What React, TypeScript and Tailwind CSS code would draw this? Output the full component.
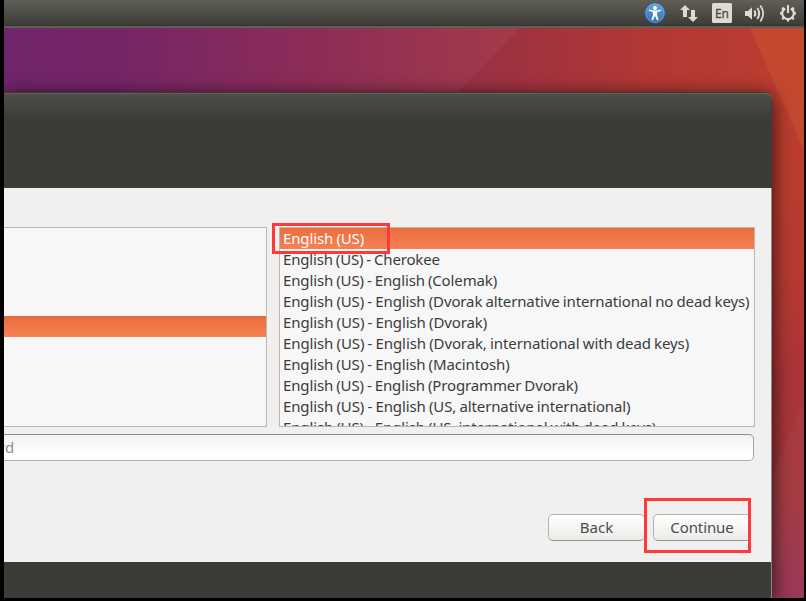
import React from "react";

const layouts = [
  { name: "English (US)", cls: "tracking-[-0.13px] [word-spacing:-0.5px]" },
  { name: "English (US) - Cherokee", cls: "tracking-[-0.16px] [word-spacing:-0.8px]" },
  { name: "English (US) - English (Colemak)", cls: "tracking-[-0.13px] [word-spacing:-0.7px]" },
  {
    name: "English (US) - English (Dvorak alternative international no dead keys)",
    cls: "tracking-[-0.13px] [word-spacing:-0.5px]",
  },
  { name: "English (US) - English (Dvorak)", cls: "tracking-[-0.1px] [word-spacing:-0.6px]" },
  {
    name: "English (US) - English (Dvorak, international with dead keys)",
    cls: "tracking-[-0.11px] [word-spacing:-0.5px]",
  },
  { name: "English (US) - English (Macintosh)", cls: "tracking-[-0.12px] [word-spacing:-0.6px]" },
  { name: "English (US) - English (Programmer Dvorak)", cls: "tracking-[-0.13px] [word-spacing:-0.7px]" },
  {
    name: "English (US) - English (US, alternative international)",
    cls: "tracking-[-0.12px] [word-spacing:-0.5px]",
  },
  {
    name: "English (US) - English (US, international with dead keys)",
    cls: "tracking-[-0.14px] [word-spacing:-0.6px]",
  },
];

function Wallpaper() {
  return (
    <svg className="absolute inset-0 h-full w-full" viewBox="0 0 800 570" preserveAspectRatio="none">
      <defs>
        <linearGradient id="sky" gradientUnits="userSpaceOnUse" x1="0" y1="0" x2="800" y2="0">
          <stop offset="0" stopColor="#70246b" />
          <stop offset="0.14" stopColor="#752567" />
          <stop offset="0.34" stopColor="#892b5a" />
          <stop offset="0.5" stopColor="#922f50" />
          <stop offset="0.65" stopColor="#a1323f" />
          <stop offset="0.8" stopColor="#b13834" />
          <stop offset="1" stopColor="#bc3e2e" />
        </linearGradient>
        <linearGradient id="facet" gradientUnits="userSpaceOnUse" x1="300" y1="0" x2="500" y2="0">
          <stop offset="0" stopColor="#a84858" stopOpacity="0" />
          <stop offset="1" stopColor="#a84858" stopOpacity="0.35" />
        </linearGradient>
        <linearGradient id="side" x1="0" y1="0" x2="0" y2="1">
          <stop offset="0" stopColor="#bc3e2e" />
          <stop offset="0.35" stopColor="#b63a30" />
          <stop offset="0.55" stopColor="#ab3437" />
          <stop offset="0.8" stopColor="#a0363f" />
          <stop offset="1" stopColor="#93325a" />
        </linearGradient>
      </defs>
      <rect width="800" height="570" fill="url(#sky)" />
      <rect x="766" y="66" width="34" height="504" fill="url(#side)" />
      <path d="M300 0H516L451 66H300Z" fill="url(#facet)" />
      <path d="M746 0H800V122Z" fill="#c44c30" opacity="0.8" />
      <path d="M800 374V570H767V450Z" fill="#b05050" opacity="0.25" />
    </svg>
  );
}

function Indicators() {
  return (
    <svg className="ml-auto h-[25px] w-[164px]" viewBox="640 0 164 25">
      <defs>
        <linearGradient id="ball" x1="0" y1="0" x2="0" y2="1">
          <stop offset="0" stopColor="#6fa3d8" />
          <stop offset="1" stopColor="#2d74ae" />
        </linearGradient>
      </defs>
      <circle cx="655" cy="13" r="10.3" fill="url(#ball)" stroke="#235d90" strokeWidth="1" />
      <circle cx="655" cy="13" r="9.2" fill="none" stroke="#8ab8e2" strokeWidth="0.8" opacity="0.5" />
      <g fill="#fff">
        <circle cx="655" cy="8" r="2" />
        <path d="M649 9.4L653.5 10.4H656.5L661 9.4V10.7L657 12.2V15L658.6 19.8L657 20.2L655 15.8L653 20.2L651.4 19.8L653 15V12.2L649 10.7Z" />
      </g>
      <g fill="#dfdbd2">
        <path d="M685 5L690 10H687V17H683V10H680Z" />
        <path d="M691 10H695V17H698L693 22L688 17H691Z" />
        <rect x="712" y="3" width="20" height="20" rx="1.5" />
        <path d="M745 11H748L752 7.3V19.7L748 16H745Z" />
      </g>
      <text
        x="715"
        y="18"
        fontSize="12.5"
        textLength="14"
        lengthAdjust="spacingAndGlyphs"
        fill="#4a4944"
        stroke="#4a4944"
        strokeWidth="0.3"
        fontFamily="Noto Sans, sans-serif"
      >
        En
      </text>
      <g fill="none" stroke="#dfdbd2">
        <path d="M754.3 10.5Q756.6 13.5 754.3 16.5" strokeWidth="1.9" />
        <path d="M757.3 8Q761 13.5 757.3 19" strokeWidth="1.9" />
        <path d="M760.3 5.5Q766 13.5 760.3 21.5" strokeWidth="1.7" />
        <path d="M785 8.4A5.8 5.8 0 1 0 791 8.4" strokeWidth="2.2" />
        <path d="M788 5V13" strokeWidth="2.1" />
        <path
          d="M780 13.4H783M793 13.4H796M788 18.5V21.4M782.2 7.6L784.8 10.2M793.8 7.6L791.2 10.2M782.2 19.2L784.5 16.9M793.8 19.2L791.5 16.9"
          strokeWidth="2.3"
        />
      </g>
    </svg>
  );
}

export default function App() {
  return (
    <div className="relative flex h-[601px] w-[806px] flex-col overflow-hidden bg-black pr-[2px] pb-[3px] pl-1 font-['Noto_Sans',sans-serif] text-[15px] text-[#3c3c3c]">
      <header className="flex h-7 shrink-0 border-b-2 border-[#5f5e57] bg-linear-to-b from-[#5f5e57] to-[#3c3b37] shadow-[inset_0_-1px_0_#35342f]">
        <Indicators />
      </header>
      <main className="relative flex-1 overflow-hidden">
        <Wallpaper />
        <section className="relative mt-16 mr-8 flex h-[506px] flex-col rounded-tr-[8px] border-t border-r border-t-[#393834] border-r-[#8d8a85] bg-[#f1f0ee] shadow-[0_4px_18px_2px_rgba(0,0,0,0.65)]">
          <div className="-mr-px h-[95px] shrink-0 rounded-tr-[7px] border-t border-r border-t-[#63625b] border-r-[#403f3b] bg-linear-to-b from-[#4e4d47] to-[#3c3b37] to-28%" />
          <div className="flex flex-1 flex-col pt-[39px]">
            <div className="flex h-[200px] gap-3 pr-4">
              <div className="w-[263px] border-y border-r border-[#bab6b1] bg-[#f7f7f7] pt-22">
                <div className="h-[21px] border-t border-[#d9693a] bg-linear-to-b from-[#eb6d3c] to-[#f58154]" />
              </div>
              <ul className="w-[476px] overflow-hidden border border-[#bab6b1] bg-[#f7f7f7]">
                {layouts.map((layout, i) => (
                  <li
                    key={layout.name}
                    className={
                      i === 0
                        ? "h-[21px] bg-linear-to-b from-[#eb6d3c] to-[#f58154] pl-[3px] leading-[21px] whitespace-nowrap text-white"
                        : "h-[21px] pl-[3px] leading-[21px] whitespace-nowrap"
                    }
                  >
                    <span className={layout.cls}>{layout.name}</span>
                  </li>
                ))}
              </ul>
            </div>
            <div className="mt-[7px] mr-[17px] flex h-[27px] items-center rounded-r-[5px] border-y border-r border-t-[#8e8e8b] border-r-[#a3a19d] border-b-[#b3b0ab] bg-linear-to-b from-[#f1f1f1] to-white to-70% text-[#8c8c8c]">
              <span className="-ml-[5px]">rd</span>
            </div>
            <div className="mt-[53px] mr-5 flex justify-end gap-2 text-[#4c4c4c]">
              <button className="h-[27px] w-[97px] rounded-[5px] border border-[#b5b2ad] border-b-[#93918d] bg-linear-to-b from-white to-[#ebebe9]">Back</button>
              <button className="h-[27px] w-[98px] rounded-[5px] border border-[#b5b2ad] border-b-[#93918d] bg-linear-to-b from-white to-[#ebebe9] tracking-[-0.1px]">Continue</button>
            </div>
          </div>
          <footer className="h-9 shrink-0 bg-[#3c3b37]" />
        </section>
      </main>
      <div className="absolute top-[223px] left-[272px] h-[31px] w-[118px] border-3 border-[#ff3838]" />
      <div className="absolute top-[498px] left-[644px] h-[55px] w-[107px] border-3 border-[#ff3838]" />
    </div>
  );
}
